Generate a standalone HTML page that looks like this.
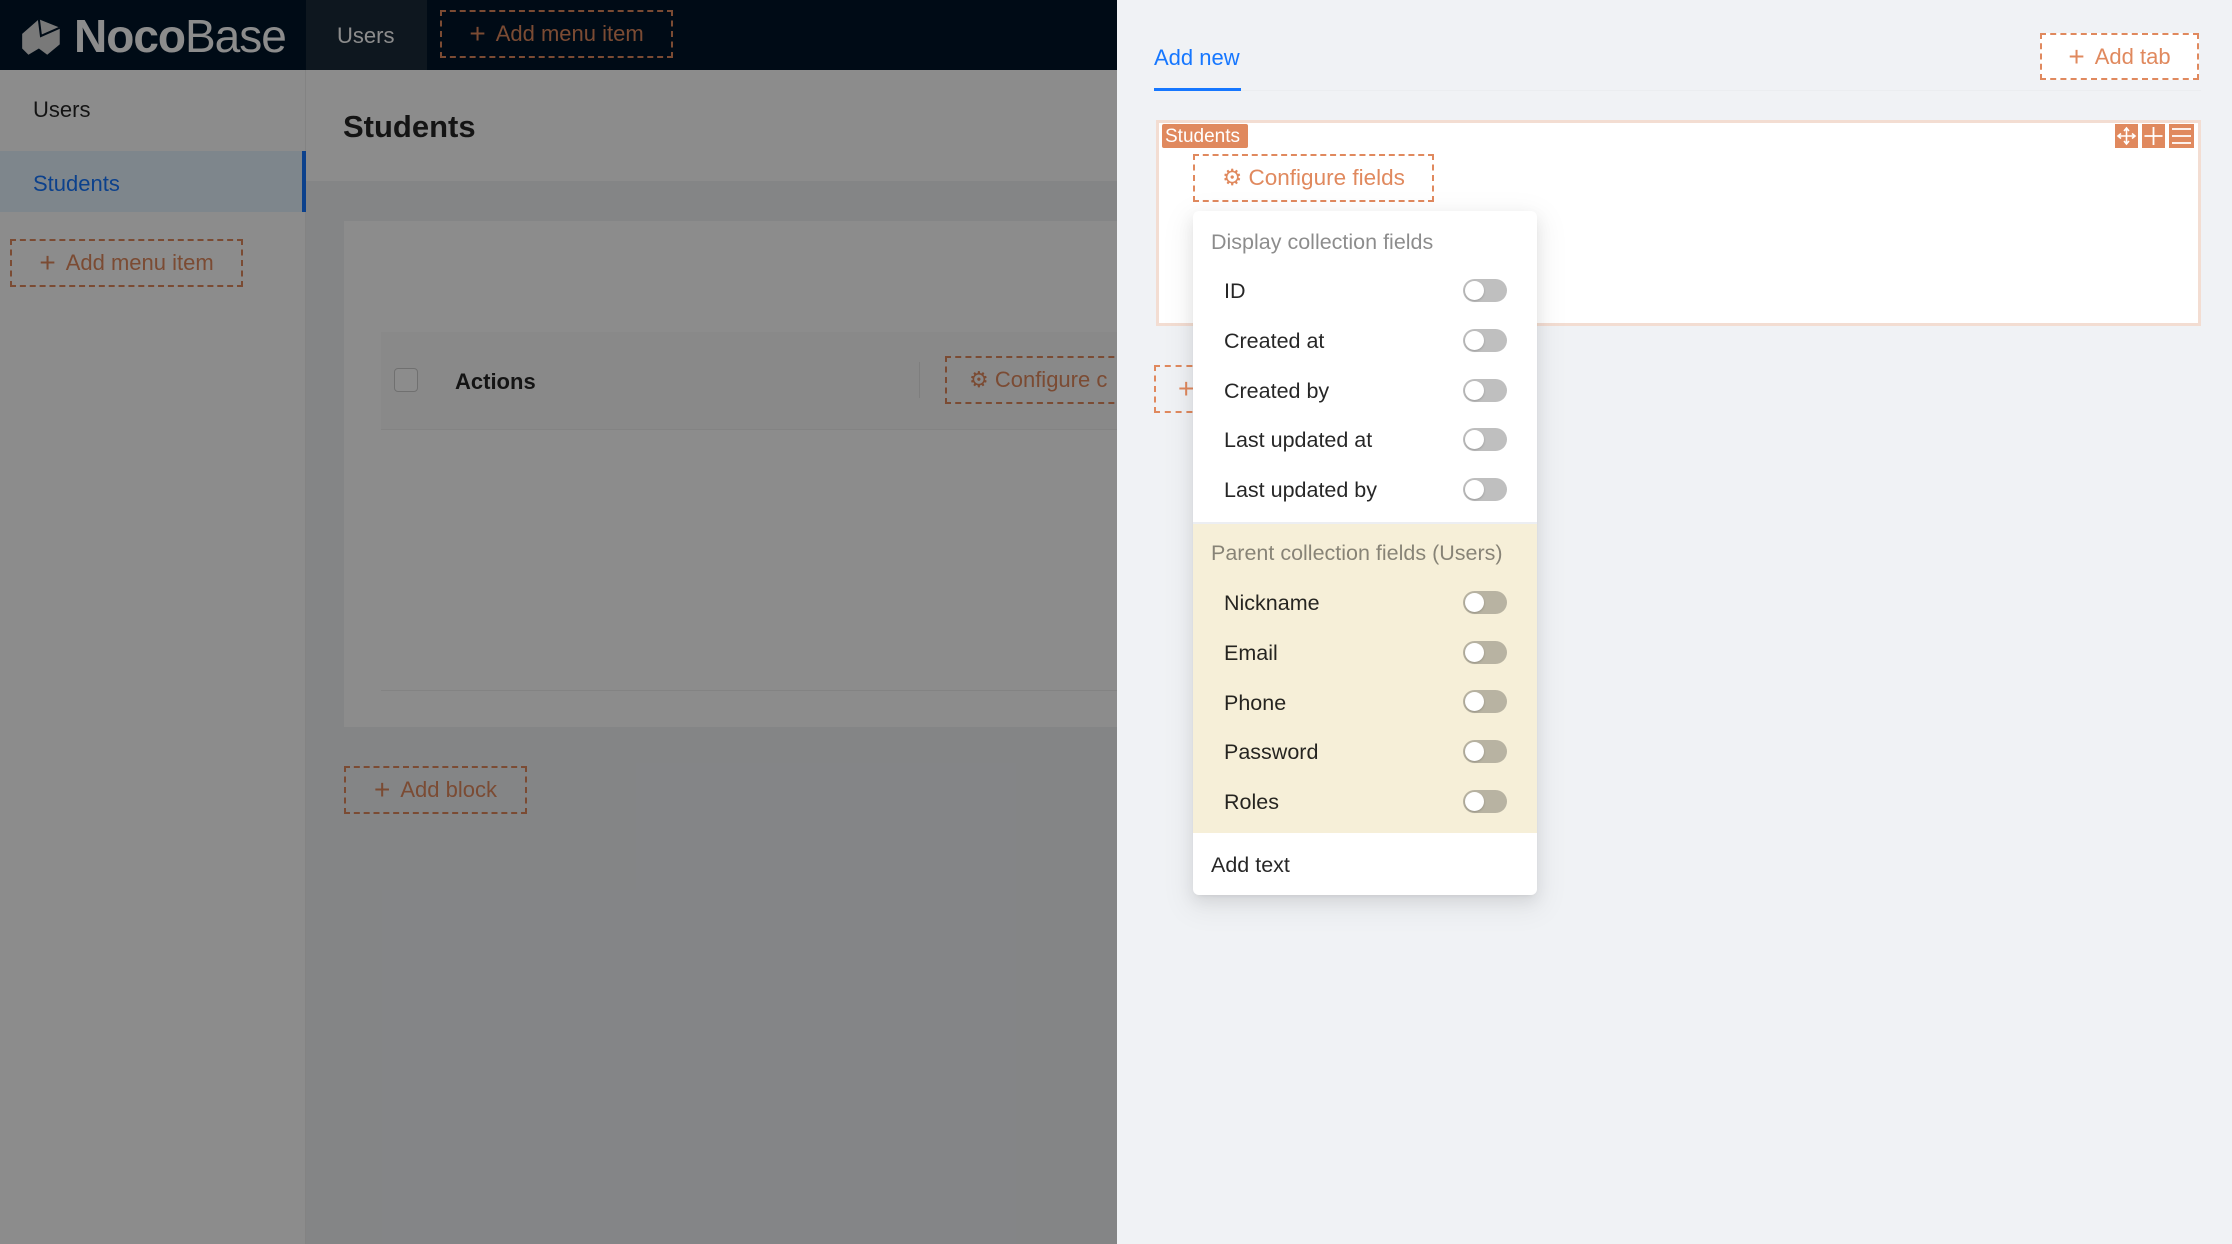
<!DOCTYPE html>
<html><head><meta charset="utf-8"><style>
*{box-sizing:border-box;margin:0;padding:0}
body{width:2232px;height:1244px;overflow:hidden;font-family:"Liberation Sans",Arial,sans-serif;background:#f0f2f5;position:relative;color:rgba(0,0,0,.85)}
.a{position:absolute}
.dash{border:2px dashed #e0895e;color:#e0895e;font-size:22px;display:flex;align-items:center;justify-content:center;gap:10px;background:transparent}
.t{position:absolute;font-size:21.5px}
.tg{position:absolute;left:1463px;width:44px;height:23px;border-radius:12px;background:rgba(0,0,0,.25)}
.tg::after{content:"";position:absolute;left:2px;top:2px;width:19px;height:19px;border-radius:50%;background:#fff;box-shadow:0 1px 2px rgba(0,0,0,.2)}
</style></head><body>
<div class="a" style="left:0;top:0;width:1117px;height:70px;background:#001529"></div>
<div class="a" style="left:306px;top:0;width:121px;height:70px;background:#1a2a3a"></div>
<div class="a" style="left:18px;top:9px;font-size:46px;color:#fff;font-weight:bold;letter-spacing:-1px;display:flex;align-items:center;gap:8px"><svg width="48" height="46" viewBox="0 0 46 44"><path d="M4 20 L20 6 L40 14 L40 30 L28 40 L20 34 L10 40 L4 34 Z" fill="#ddd"/><path d="M20 6 L22 22 L40 14" fill="none" stroke="#001529" stroke-width="2"/></svg><span>Noco<span style="font-weight:normal">Base</span></span></div>
<div class="t" style="left:337px;top:23px;color:#fff;font-size:22px">Users</div>
<div class="a dash" style="left:440px;top:10px;width:233px;height:48px"><span style="font-size:28px">+</span>Add menu item</div>
<div class="a" style="left:0;top:70px;width:306px;height:1174px;background:#fff;border-right:1px solid #eee"></div>
<div class="t" style="left:33px;top:97px;font-size:22px">Users</div>
<div class="a" style="left:0;top:151px;width:306px;height:61px;background:#e6f4ff;border-right:4px solid #1677ff"></div>
<div class="t" style="left:33px;top:171px;color:#1677ff;font-size:22px">Students</div>
<div class="a dash" style="left:10px;top:239px;width:233px;height:48px"><span style="font-size:28px">+</span>Add menu item</div>
<div class="a" style="left:306px;top:70px;width:811px;height:111px;background:#fff"></div>
<div class="t" style="left:343px;top:109px;font-size:31px;font-weight:bold">Students</div>
<div class="a" style="left:344px;top:221px;width:773px;height:506px;background:#fff"></div>
<div class="a" style="left:381px;top:332px;width:736px;height:98px;background:#fafafa;border-bottom:1px solid #eee"></div>
<div class="a" style="left:394px;top:368px;width:24px;height:24px;border:1px solid #ccc;border-radius:4px;background:#fff"></div>
<div class="t" style="left:455px;top:369px;font-size:22px;font-weight:bold">Actions</div>
<div class="a" style="left:919px;top:362px;width:1px;height:36px;background:#e5e5e5"></div>
<div class="a dash" style="left:945px;top:356px;width:200px;height:48px;justify-content:flex-start;padding-left:22px">⚙ Configure c</div>
<div class="a" style="left:381px;top:690px;width:736px;height:1px;background:#eee"></div>
<div class="a dash" style="left:344px;top:766px;width:183px;height:48px"><span style="font-size:28px">+</span>Add block</div>
<div class="a" style="left:0;top:0;width:1117px;height:1244px;background:rgba(0,0,0,.45)"></div>
<div class="a" style="left:1117px;top:0;width:1115px;height:1244px;background:#f0f2f5"></div>
<div class="a" style="left:1154px;top:90px;width:1047px;height:1px;background:#ebedf0"></div>
<div class="t" style="left:1154px;top:45px;color:#1677ff;font-size:22px">Add new</div>
<div class="a" style="left:1154px;top:88px;width:87px;height:3px;background:#1677ff"></div>
<div class="a dash" style="left:2040px;top:33px;width:159px;height:47px;background:#fff"><span style="font-size:28px">+</span>Add tab</div>
<div class="a" style="left:1156px;top:120px;width:1045px;height:206px;background:#fff;border:3px solid #f3ddd2"></div>
<div class="a" style="left:1162px;top:124px;width:86px;height:24px;background:#e0895e;color:#fff;font-size:19px;padding-left:3px;line-height:25px;border-radius:2px">Students</div>
<div class="a" style="left:2115px;top:124px;width:79px;height:24px;display:flex;gap:4px">
<svg width="23" height="24" style="background:#e0895e"><path d="M11.5 4v16M3.5 12h16M9 7l2.5-3 2.5 3M9 17l2.5 3 2.5-3M6 9.5l-3 2.5 3 2.5M17 9.5l3 2.5-3 2.5" stroke="#fff" stroke-width="1.6" fill="none"/></svg>
<svg width="23" height="24" style="background:#e0895e"><path d="M11.5 3v18M2.5 12h18" stroke="#fff" stroke-width="1.8"/></svg>
<svg width="25" height="24" style="background:#e0895e"><path d="M3 5h19M3 12h19M3 19h19" stroke="#fff" stroke-width="1.8"/></svg></div>
<div class="a dash" style="left:1193px;top:154px;width:241px;height:48px;background:#fff;font-size:22.5px">⚙ Configure fields</div>
<div class="a dash" style="left:1154px;top:365px;width:60px;height:48px;justify-content:flex-start;padding-left:22px"><span style="font-size:28px">+</span></div>
<div class="a" style="left:1193px;top:211px;width:344px;height:684px;background:#fff;border-radius:6px;box-shadow:0 6px 16px rgba(0,0,0,.08),0 3px 6px -4px rgba(0,0,0,.12),0 9px 28px 8px rgba(0,0,0,.05)"></div>
<div class="a" style="left:1193px;top:522px;width:344px;height:311px;background:#f6efd8;border-top:2px solid #eceef2"></div>
<div class="t" style="left:1211px;top:230px;color:rgba(0,0,0,.45)">Display collection fields</div>
<div class="t" style="left:1224px;top:279px">ID</div><div class="tg" style="top:279px"></div>
<div class="t" style="left:1224px;top:329px">Created at</div><div class="tg" style="top:329px"></div>
<div class="t" style="left:1224px;top:379px">Created by</div><div class="tg" style="top:379px"></div>
<div class="t" style="left:1224px;top:428px">Last updated at</div><div class="tg" style="top:428px"></div>
<div class="t" style="left:1224px;top:478px">Last updated by</div><div class="tg" style="top:478px"></div>
<div class="t" style="left:1211px;top:541px;color:rgba(0,0,0,.45)">Parent collection fields (Users)</div>
<div class="t" style="left:1224px;top:591px">Nickname</div><div class="tg" style="top:591px"></div>
<div class="t" style="left:1224px;top:641px">Email</div><div class="tg" style="top:641px"></div>
<div class="t" style="left:1224px;top:691px">Phone</div><div class="tg" style="top:690px"></div>
<div class="t" style="left:1224px;top:740px">Password</div><div class="tg" style="top:740px"></div>
<div class="t" style="left:1224px;top:790px">Roles</div><div class="tg" style="top:790px"></div>
<div class="t" style="left:1211px;top:853px">Add text</div>
</body></html>
